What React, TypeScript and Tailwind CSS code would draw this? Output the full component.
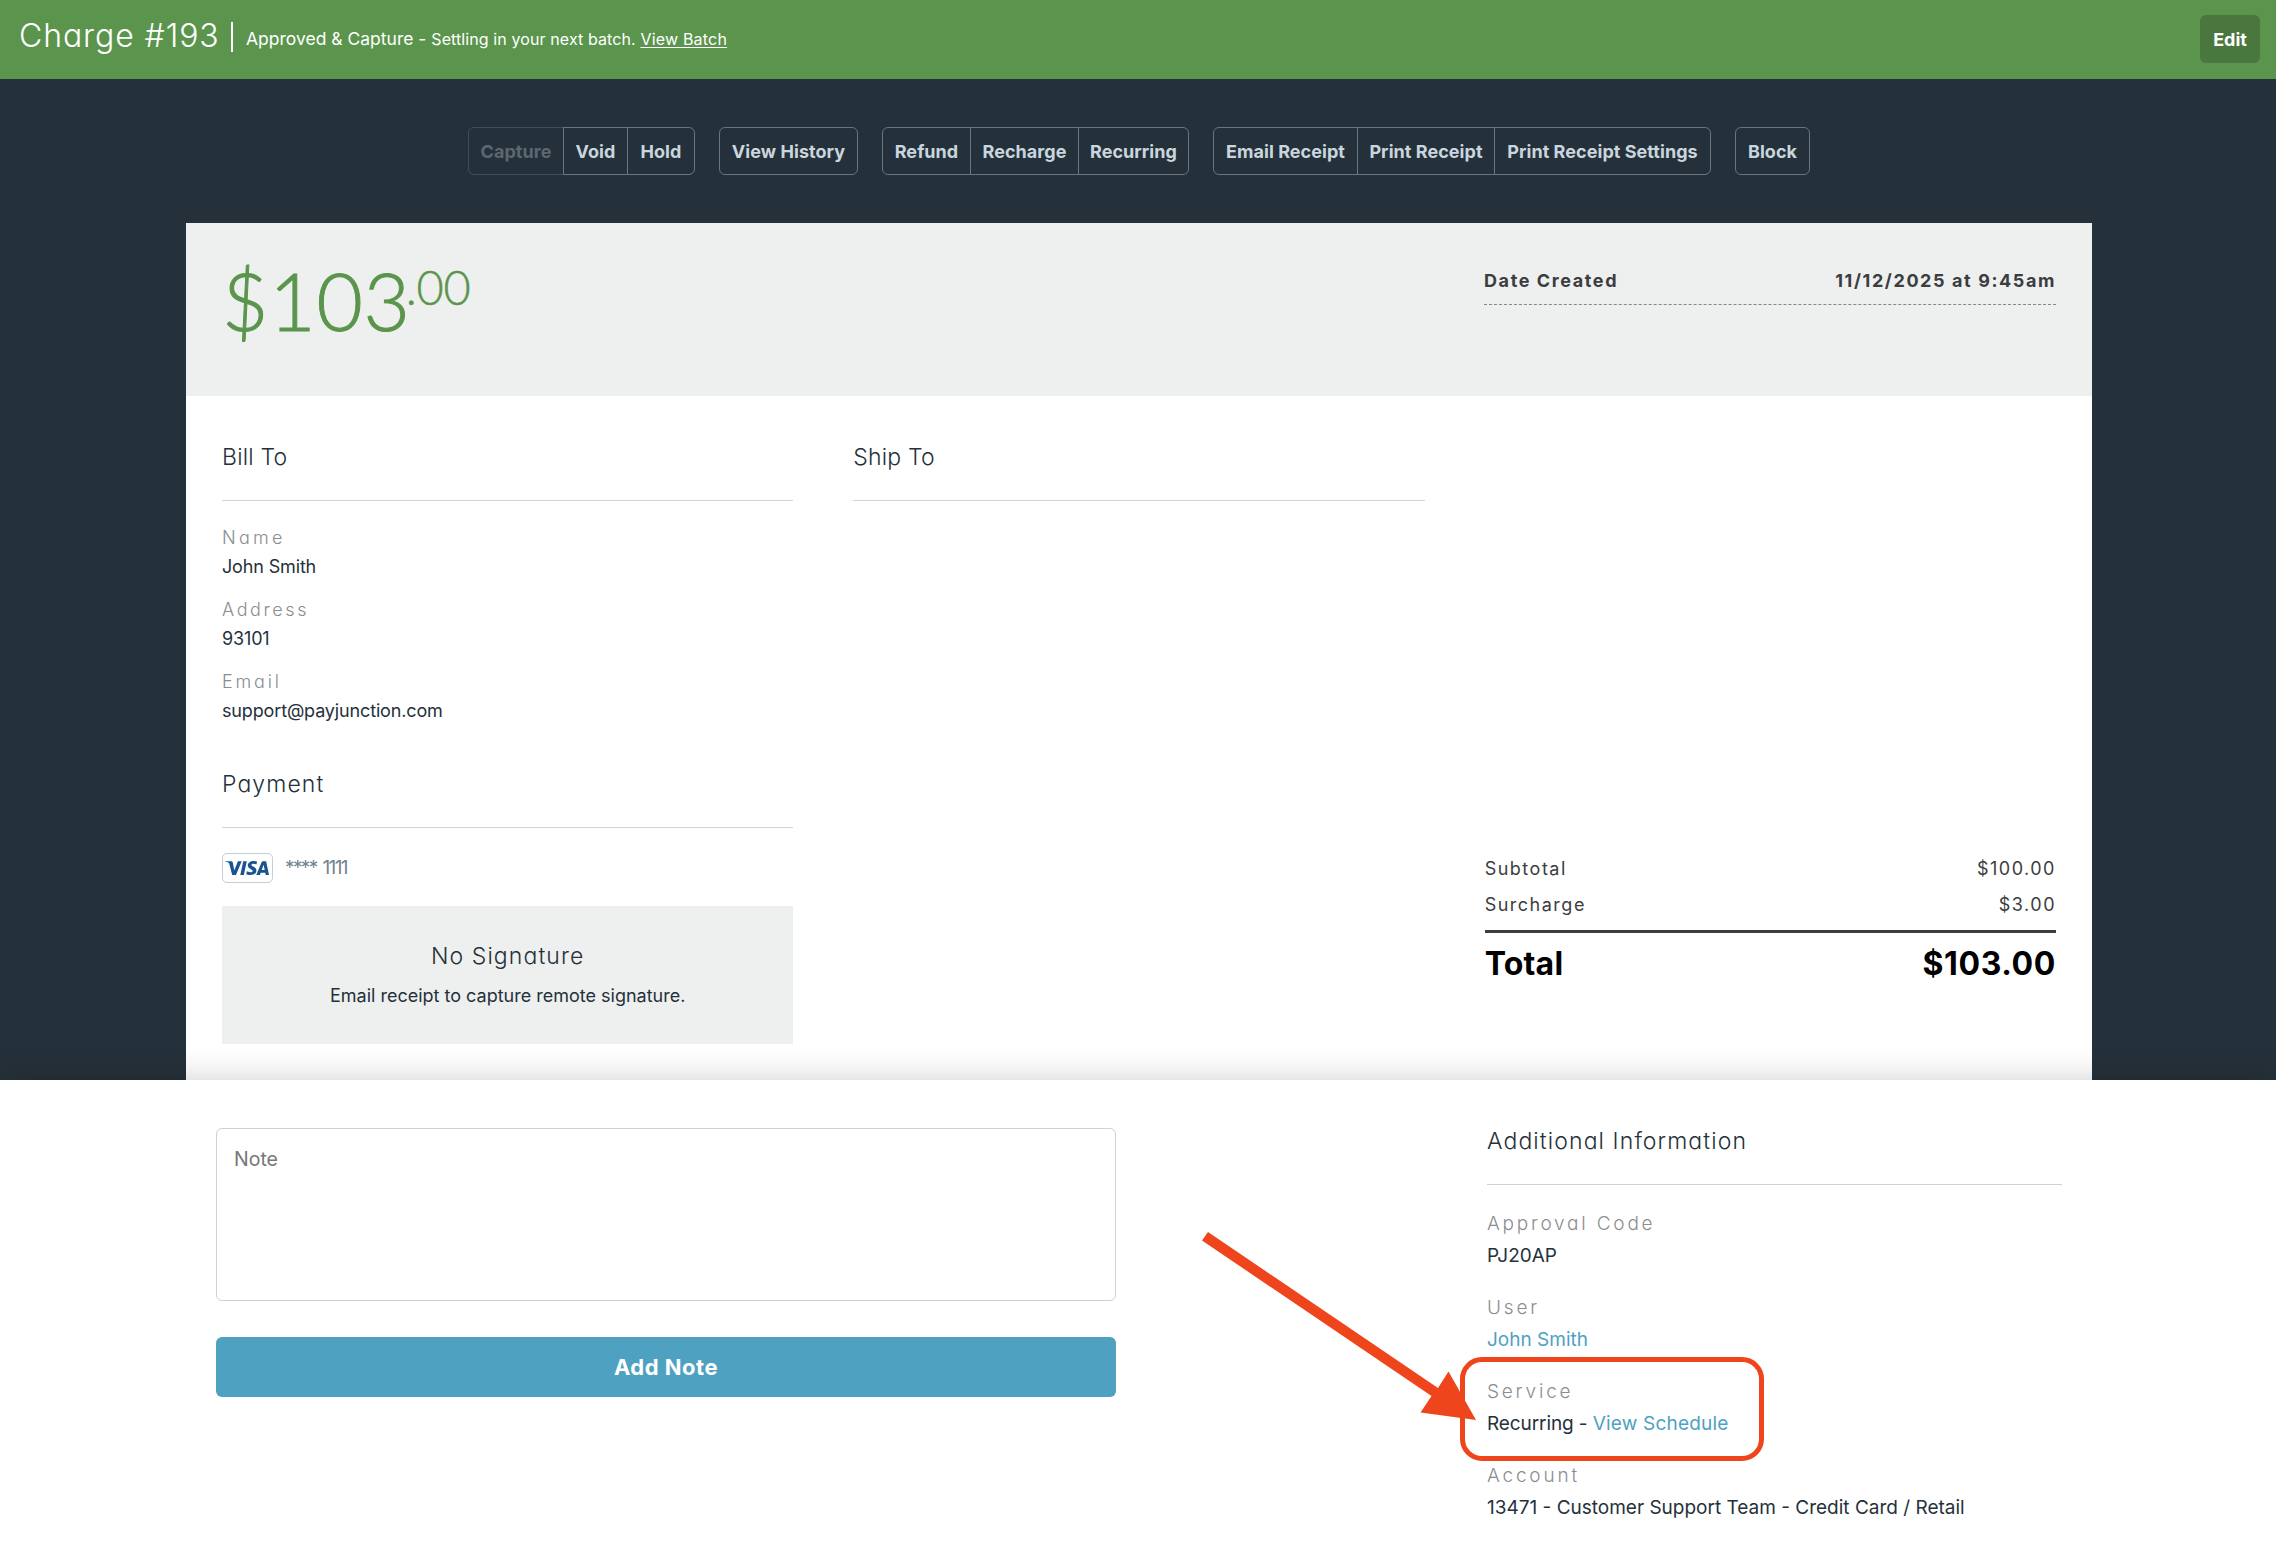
import { SiVisa } from 'react-icons/si';

const buttonGroups = [
  [
    { label: 'Capture', width: 'w-[96px]', disabled: true },
    { label: 'Void', width: 'w-[65px]' },
    { label: 'Hold', width: 'w-[68px]' },
  ],
  [{ label: 'View History', width: 'w-[139px]' }],
  [
    { label: 'Refund', width: 'w-[89px]' },
    { label: 'Recharge', width: 'w-[109px]' },
    { label: 'Recurring', width: 'w-[111px]' },
  ],
  [
    { label: 'Email Receipt', width: 'w-[145px]' },
    { label: 'Print Receipt', width: 'w-[138px]' },
    { label: 'Print Receipt Settings', width: 'w-[217px]' },
  ],
  [{ label: 'Block', width: 'w-[75px]' }],
];

const billTo = [
  { label: 'Name', value: 'John Smith', tracking: 'tracking-[3.3px]' },
  { label: 'Address', value: '93101', tracking: 'tracking-[2.6px]' },
  { label: 'Email', value: 'support@payjunction.com', tracking: 'tracking-[2.8px]' },
];

function SectionTitle({ children }: { children: React.ReactNode }) {
  return (
    <h2 className="h-[61px] border-b border-[#d0d2d3] pt-px text-[23px] leading-8 font-light tracking-[1.1px] text-[#25313a] [font-feature-settings:'cv11']">
      {children}
    </h2>
  );
}

function InfoField({ label, children }: { label: string; children: React.ReactNode }) {
  return (
    <div className="text-[19px] leading-8">
      <div className="font-light tracking-[2.8px] text-[#8b8d8f] [font-feature-settings:'cv11']">{label}</div>
      <div className="whitespace-nowrap text-[#25313a]">{children}</div>
    </div>
  );
}

export default function App() {
  return (
    <div className="relative h-[1544px] w-[2276px] overflow-hidden bg-white font-['Inter',sans-serif]">
      <div className="h-[1080px] overflow-hidden bg-[#25313a]">
        {/* Header */}
        <header className="flex h-[79px] items-start justify-between bg-[#5b954d] pr-4 pl-[19px] text-white">
          <div className="flex items-start pt-[17px]">
            <h1 className="w-[200px] pt-px text-[32px] leading-9 font-light tracking-[0.9px] whitespace-nowrap [font-feature-settings:'cv11']">
              Charge #193
            </h1>
            <span className="mt-[5px] ml-3 h-[30px] w-[2px] bg-white" />
            <p className="ml-[13px] pt-[7px] leading-[30px] whitespace-nowrap">
              <span className="text-[17.5px]">Approved &amp; Capture - </span>
              <span className="text-[16px] tracking-[0.1px]">Settling in your next batch. </span>
              <a href="#" className="text-[16px] tracking-[0.2px] underline underline-offset-2">View Batch</a>
            </p>
          </div>
          <button className="mt-[15px] h-12 w-[60px] rounded-md bg-[#49773e] text-[18px] font-bold">Edit</button>
        </header>

        {/* Actions */}
        <nav className="flex gap-6 py-12 pl-[468px]">
          {buttonGroups.map((group, i) => (
            <div key={i} className="flex">
              {group.map((button) => (
                <button
                  key={button.label}
                  disabled={button.disabled}
                  className={`${button.width} -mr-px h-12 border text-[18px] font-bold tracking-[0.05px] whitespace-nowrap first:rounded-l-md last:mr-0 last:rounded-r-md ${
                    button.disabled
                      ? 'border-[#414e57] text-[#5b6871]'
                      : 'border-[#69767f] text-[#c9d6df]'
                  }`}
                >
                  {button.label}
                </button>
              ))}
            </div>
          ))}
        </nav>

        {/* Receipt */}
        <main className="ml-[186px] w-[1906px] bg-white">
          <div className="flex h-[173px] justify-between bg-[#eef0ef] pr-9 pl-[36px]">
            <div className="flex pt-[40px] font-['Lato',sans-serif] font-light text-[#5b954d]">
              <span className="text-[80px] leading-[74px] tracking-[0.8px] [-webkit-text-stroke:1px]">$103</span>
              <span className="-ml-[5px] text-[47px] leading-[48px] tracking-[-0.3px] [-webkit-text-stroke:0.4px]">.00</span>
            </div>
            <div className="w-[572px] pt-[44px]">
              <div className="flex h-[38px] justify-between border-b border-dashed border-[#85878a] text-[18px] leading-7 font-bold text-[#3c3d40]">
                <span className="tracking-[1.6px]">Date Created</span>
                <span className="tracking-[1.6px]">11/12/2025 at 9:45am</span>
              </div>
            </div>
          </div>

          <div className="grid grid-cols-3 gap-[60px] px-9 pt-11 pb-16">
            <div>
              <SectionTitle>
                <span className="tracking-[0.2px]">Bill To</span>
              </SectionTitle>
              <div className="mt-[23px] flex flex-col gap-4 text-[18px] leading-7">
                {billTo.map((field) => (
                  <div key={field.label}>
                    <div className={`font-light text-[#8b8d8f] [font-feature-settings:'cv11'] ${field.tracking}`}>{field.label}</div>
                    <div className="pt-px leading-[27px] tracking-[-0.15px] text-[#25313a]">{field.value}</div>
                  </div>
                ))}
              </div>

              <div className="mt-[43px]">
                <SectionTitle>Payment</SectionTitle>
              </div>
              <div className="mt-6 flex h-[31px] items-center gap-3">
                <span className="flex h-[30px] w-[51px] items-center justify-center rounded-[5px] border border-[#c3cfda] bg-white pr-[2px]">
                  <SiVisa size={44} color="#1a5490" />
                </span>
                <span className="pt-[2px] text-[19px] tracking-[-1.6px] text-[#75838d] [word-spacing:2px]">**** 1111</span>
              </div>
              <div className="mt-[23px] h-[138px] bg-[#eef0ef] pt-[34px] text-center text-[#25313a]">
                <div className="text-[23px] leading-8 font-light tracking-[1.1px] [font-feature-settings:'cv11']">No Signature</div>
                <p className="mt-[10px] text-[18px] leading-7">Email receipt to capture remote signature.</p>
              </div>
            </div>

            <div>
              <SectionTitle>
                <span className="tracking-[0.2px]">Ship To</span>
              </SectionTitle>
            </div>

            <div className="mt-[411px] text-[18px] text-[#3c3d40]">
              <div className="flex justify-between leading-9 tracking-[1.5px]">
                <span>Subtotal</span>
                <span>$100.00</span>
              </div>
              <div className="flex justify-between leading-9 tracking-[1.5px]">
                <span>Surcharge</span>
                <span>$3.00</span>
              </div>
              <div className="mt-[7px] flex justify-between border-t-[3px] border-[#3c3d40] pt-[9px] text-[32px] leading-[44px] font-bold text-black">
                <span className="tracking-[0.2px]">Total</span>
                <span className="tracking-[0.6px]">$103.00</span>
              </div>
            </div>
          </div>
        </main>
      </div>

      {/* Notes and details */}
      <section className="relative flex h-[464px] justify-between bg-white pr-[214px] pl-[216px] shadow-[0_0_32px_rgba(0,0,0,0.2)]">
        <div className="w-[900px] pt-12">
          <textarea
            placeholder="Note"
            className="block h-[173px] w-full resize-none rounded-md border border-[#cfd1d2] px-[17px] py-[15px] text-[19.5px] leading-[30px] placeholder:text-[#777777]"
          />
          <button className="mt-9 h-[60px] w-full rounded-md bg-[#4fa1c1] text-[22px] font-bold tracking-[0.5px] text-white">
            Add Note
          </button>
        </div>

        <div className="w-[575px] pt-11">
          <SectionTitle>Additional Information</SectionTitle>
          <div className="mt-[23px] flex flex-col gap-5">
            <InfoField label="Approval Code">
              <span>PJ20AP</span>
            </InfoField>
            <InfoField label="User">
              <a href="#" className="text-[#4fa1c1]">John Smith</a>
            </InfoField>
            <InfoField label="Service">
              <span className="tracking-[-0.1px]">Recurring - </span>
              <a href="#" className="tracking-[0.2px] text-[#4fa1c1]">View Schedule</a>
            </InfoField>
            <InfoField label="Account">13471 - Customer Support Team - Credit Card / Retail</InfoField>
          </div>
        </div>
      </section>

      {/* Callout */}
      <div className="absolute top-[1357px] left-[1460px] h-[104px] w-[304px] rounded-[22px] border-[5px] border-[#ef451c]" />
      <svg className="absolute top-[1220px] left-[1190px]" width="300" height="210" fill="#ef451c">
        <path d="M18 12 248 168 258.500 151.500 286 200 230.500 192.500 241.500 176 12 20.500Z" />
      </svg>
    </div>
  );
}
